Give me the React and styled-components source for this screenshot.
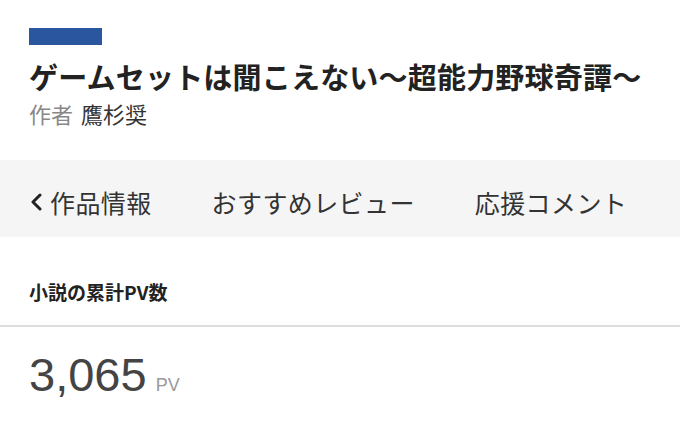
import React from 'react'
import styled, { createGlobalStyle } from 'styled-components'

const Global = createGlobalStyle`
  body {
    margin: 0;
    background: #fff;
    font-family: "Noto Sans CJK JP", "Noto Sans", sans-serif;
    color: #222;
  }
`

const Page = styled.div`
  width: 680px;
  height: 440px;
  overflow: hidden;
  background: #fff;
`

const Header = styled.header`
  padding: 28px 29px 0;
`

const Accent = styled.div`
  width: 73px;
  height: 17px;
  background: #2a56a0;
`

const Title = styled.h1`
  margin: 11px 0 0;
  font-size: 29px;
  line-height: 40px;
  font-weight: 700;
  color: #222;
  white-space: nowrap;
  letter-spacing: 0.2px;
`

const Author = styled.p`
  margin: 2px 0 0;
  font-size: 22px;
  line-height: 30px;
  color: #888;
  span {
    color: #333;
    margin-left: 8px;
  }
`

const Tabs = styled.nav`
  margin-top: 32px;
  height: 77px;
  background: #f5f5f5;
  display: flex;
  align-items: center;
  padding: 6px 0 0 29px;
  box-sizing: border-box;
  gap: 60px;
`

const Tab = styled.a`
  display: flex;
  align-items: center;
  gap: 7px;
  font-size: 25px;
  letter-spacing: 0.4px;
  color: #333;
  text-decoration: none;
  white-space: nowrap;
  svg {
    width: 14px;
    height: 18px;
  }
`

const Section = styled.section`
  padding-top: 42px;
`

const Label = styled.h2`
  margin: 0;
  padding: 0 29px 20px;
  font-size: 19px;
  line-height: 26px;
  font-weight: 700;
  color: #222;
  border-bottom: 2px solid #ddd;
`

const Count = styled.div`
  padding: 20px 29px 0;
  display: flex;
  align-items: baseline;
  gap: 9px;
  font-family: "Liberation Sans", Arial, sans-serif;
`

const Number = styled.span`
  font-size: 47px;
  color: #444;
`

const Unit = styled.span`
  font-size: 18px;
  color: #999;
`

export default function App() {
  return (
    <Page>
      <Global />
      <Header>
        <Accent />
        <Title>ゲームセットは聞こえない〜超能力野球奇譚〜</Title>
        <Author>作者<span>鷹杉奨</span></Author>
      </Header>
      <Tabs>
        <Tab>
          <svg viewBox="0 0 14 18" fill="none" stroke="#222" strokeWidth="3" strokeLinecap="round" strokeLinejoin="round">
            <path d="M11 2 L4 9 L11 16" />
          </svg>
          作品情報
        </Tab>
        <Tab>おすすめレビュー</Tab>
        <Tab>応援コメント</Tab>
      </Tabs>
      <Section>
        <Label>小説の累計PV数</Label>
        <Count>
          <Number>3,065</Number>
          <Unit>PV</Unit>
        </Count>
      </Section>
    </Page>
  )
}
